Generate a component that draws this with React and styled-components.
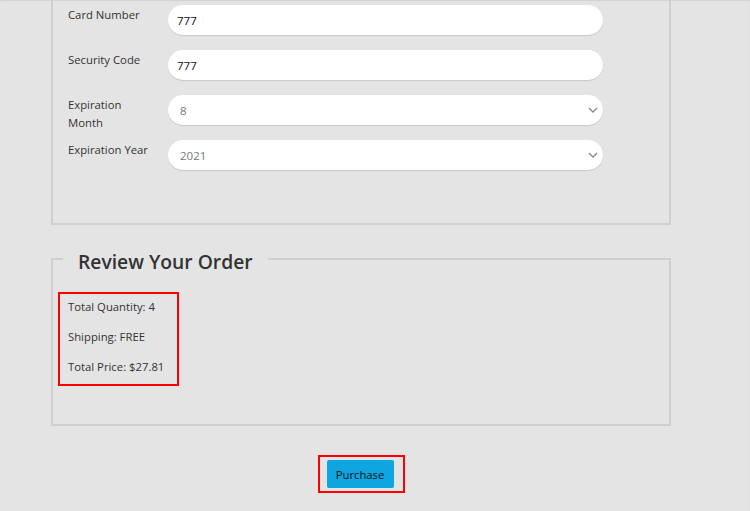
import React from "react";
import styled, { createGlobalStyle } from "styled-components";

const Global = createGlobalStyle`
  html, body { margin: 0; padding: 0; }
  body {
    background: #e4e4e4;
    font-family: "Open Sans", "Noto Sans", sans-serif;
    color: #333;
    box-shadow: inset 0 1px 1px rgba(0,0,0,0.08);
    min-height: 511px;
  }
`;

const Page = styled.div`
  width: 620px;
  margin-left: 51px;
  display: flex;
  flex-direction: column;
`;

const PaymentPanel = styled.div`
  border: 2px solid #cfcfcf;
  border-top: none;
  padding: 5px 0 53px 15px;
  display: flex;
  flex-direction: column;
  gap: 15px;
`;

const Row = styled.div`
  display: grid;
  grid-template-columns: 100px 435px;
  align-items: start;
  height: 30px;
`;

const Label = styled.label`
  font-size: 11.3px;
  line-height: 18px;
  color: #333;
  padding-top: 1px;
`;

const TextInput = styled.input`
  box-sizing: border-box;
  height: 30px;
  width: 435px;
  border: none;
  border-radius: 15px;
  background: #fff;
  box-shadow: 0 1px 1px rgba(0,0,0,0.12);
  padding: 0 9px;
  font-family: inherit;
  font-size: 11.5px;
  color: #111;
  outline: none;
`;

const SelectWrap = styled.div`
  position: relative;
  width: 435px;
  height: 30px;
`;

const Select = styled.select`
  appearance: none;
  box-sizing: border-box;
  width: 100%;
  height: 30px;
  border: none;
  border-radius: 15px;
  background: #fff;
  box-shadow: 0 1px 1px rgba(0,0,0,0.12);
  padding: 0 12px;
  font-family: inherit;
  font-size: 11.5px;
  color: #777;
  outline: none;
`;

const Chevron = styled.svg`
  position: absolute;
  right: 5px;
  top: 11px;
  pointer-events: none;
`;

const ReviewPanel = styled.fieldset`
  margin: 18px 0 0;
  border: 2px solid #cfcfcf;
  padding: 17px 0 38px 5px;
  min-width: 0;
`;

const Legend = styled.legend`
  margin-left: 5px;
  padding: 6px 15px 0;
  font-size: 19.3px;
  font-weight: 600;
  color: #333;
  line-height: 26px;
`;

const Highlight = styled.div`
  display: inline-flex;
  flex-direction: column;
  gap: 8px;
  border: 2px solid #ff0000;
  padding: 2px 13px 6px 8px;
`;

const Item = styled.p`
  margin: 0;
  font-size: 11.3px;
  line-height: 22px;
  color: #333;
`;

const Actions = styled.div`
  display: flex;
  justify-content: center;
  padding-top: 29px;
`;

const ButtonFrame = styled.div`
  border: 2px solid #ff0000;
  padding: 3px 9px 3px 7px;
`;

const Button = styled.button`
  display: block;
  width: 67px;
  height: 28px;
  border: none;
  border-radius: 2px;
  background: #0ea5e0;
  color: #111;
  font-family: inherit;
  font-size: 11.3px;
  cursor: pointer;
  padding: 0;
`;

const ChevronIcon = () => (
  <Chevron width="10" height="8" viewBox="0 0 10 8">
    <path d="M1 2 L5 6 L9 2" fill="none" stroke="#888" strokeWidth="1.3" />
  </Chevron>
);

export default function App() {
  return (
    <>
      <Global />
      <Page>
        <PaymentPanel>
          <Row>
            <Label>Card Number</Label>
            <TextInput defaultValue="777" />
          </Row>
          <Row>
            <Label>Security Code</Label>
            <TextInput defaultValue="777" />
          </Row>
          <Row>
            <Label>Expiration<br />Month</Label>
            <SelectWrap>
              <Select defaultValue="8">
                {[1,2,3,4,5,6,7,8,9,10,11,12].map((m) => (
                  <option key={m} value={String(m)}>{m}</option>
                ))}
              </Select>
              <ChevronIcon />
            </SelectWrap>
          </Row>
          <Row>
            <Label>Expiration Year</Label>
            <SelectWrap>
              <Select defaultValue="2021">
                {[2021,2022,2023,2024,2025].map((y) => (
                  <option key={y} value={String(y)}>{y}</option>
                ))}
              </Select>
              <ChevronIcon />
            </SelectWrap>
          </Row>
        </PaymentPanel>
        <ReviewPanel>
          <Legend>Review Your Order</Legend>
          <Highlight>
            <Item>Total Quantity: 4</Item>
            <Item>Shipping: FREE</Item>
            <Item>Total Price: $27.81</Item>
          </Highlight>
        </ReviewPanel>
        <Actions>
          <ButtonFrame>
            <Button>Purchase</Button>
          </ButtonFrame>
        </Actions>
      </Page>
    </>
  );
}
